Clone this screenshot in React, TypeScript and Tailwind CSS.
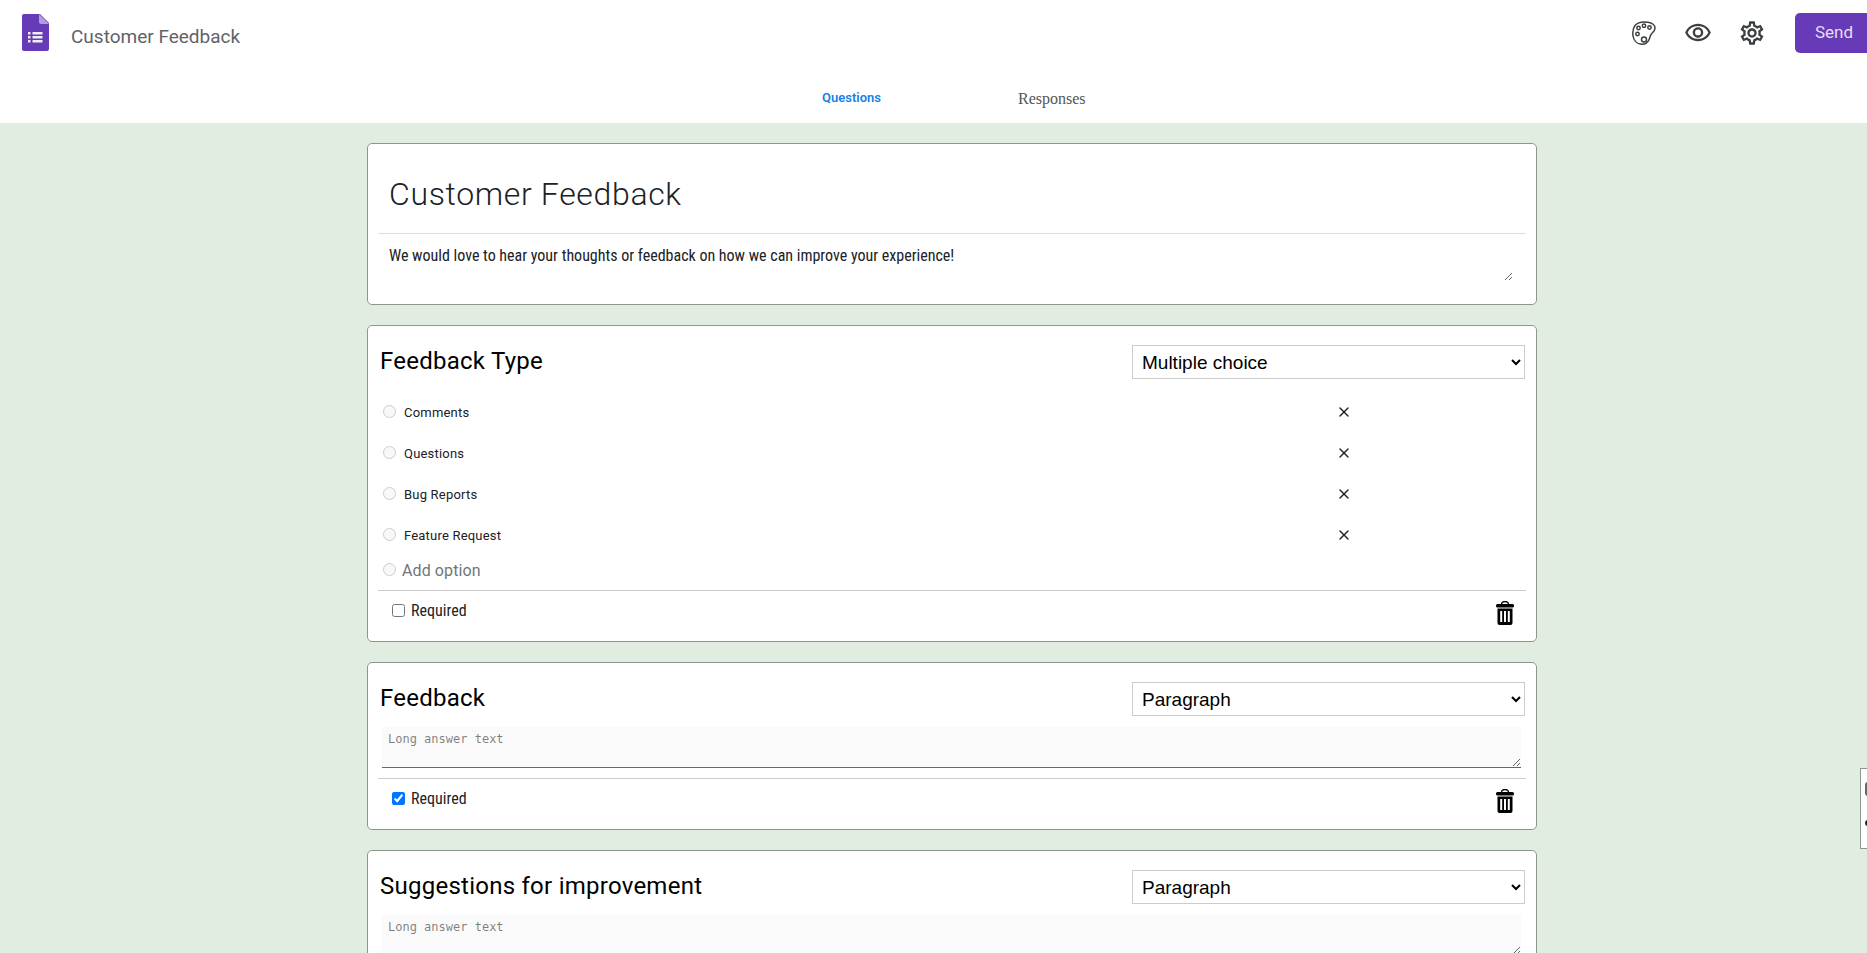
import React from 'react';
import { X } from 'lucide-react';
import { MdOutlineSettings, MdOutlineVisibility } from 'react-icons/md';

const sans = 'font-["Roboto",sans-serif]';

const FormsLogo = () => (
    <svg width="27" height="37" viewBox="0 0 27 37">
        <path d="M2 0h16l9 9v26a2 2 0 0 1-2 2H2a2 2 0 0 1-2-2V2a2 2 0 0 1 2-2z" fill="#673ab7" />
        <path d="M17 0l10 10H19a2 2 0 0 1-2-2z" fill="#b39ddb" />
        <g fill="#f1edf8">
            <rect x="6" y="18" width="2.5" height="2.5" />
            <rect x="6" y="22" width="2.5" height="2.5" />
            <rect x="6" y="26" width="2.5" height="2.5" />
            <rect x="10.5" y="18" width="10" height="2.5" />
            <rect x="10.5" y="22" width="10" height="2.5" />
            <rect x="10.5" y="26" width="10" height="2.5" />
        </g>
    </svg>
);

const PaletteIcon = () => (
    <svg width="24" height="24" viewBox="0 0 24 24" fill="none" stroke="#3c4043" strokeWidth="1.5">
        <path d="M3 4.5C5.5 1.5 11 .5 16 1.2c4 .6 7.2 3 7 6.3-.2 2.7-2.2 3.8-3.6 5.4-1.3 1.5-1.3 3.6-2.4 5.8-1.3 2.8-3.6 4.6-7 4.5C5 23 1.7 19.500 1 15 .5 11 1 7 3 4.500z" />
        <circle cx="6.500" cy="7" r="1.700" />
        <circle cx="12" cy="4.800" r="1.700" />
        <circle cx="17.500" cy="6.500" r="1.700" />
        <circle cx="5.500" cy="13" r="1.700" />
        <circle cx="12" cy="18.500" r="2.500" />
    </svg>
);

const TrashIcon = () => (
    <svg width="18" height="24" viewBox="0 0 18 24" className="shrink-0">
        <path d="M5.500 3.500C5.500 1.500 7 .5 9 .5s3.500 1 3.500 3" fill="none" stroke="#000" strokeWidth="1.400" />
        <rect x="0" y="3" width="18" height="3.500" rx="1.500" fill="#000" />
        <path d="M1.500 7.500h15V22a2 2 0 0 1-2 2h-11a2 2 0 0 1-2-2z" fill="#000" />
        <g fill="#fff">
            <rect x="4.200" y="10" width="2" height="11" />
            <rect x="8" y="10" width="2" height="11" />
            <rect x="11.800" y="10" width="2" height="11" />
        </g>
    </svg>
);

const Card = ({ children, className = '' }: { children: React.ReactNode; className?: string }) => (
    <div className={`bg-white border border-[#8f9591] rounded-[5px] ${className}`}>{children}</div>
);

const QuestionHead = ({ title, type }: { title: string; type: string }) => (
    <div className="flex items-center justify-between pl-3 pr-[11px] pt-[19px]">
        <h2 className={`${sans} -translate-y-[1px] text-[24px] leading-[33px] tracking-[0.25px] text-black`}>{title}</h2>
        <select
            defaultValue={type}
            className='w-[393px] h-[34px] pl-[5px] bg-white border border-[#ccc] text-[19px] text-black font-["Liberation_Sans",sans-serif]'
        >
            <option>Multiple choice</option>
            <option>Paragraph</option>
        </select>
    </div>
);

const Footer = ({ required }: { required?: boolean }) => (
    <div className="mx-[10px] border-t border-[#ccc] flex items-start justify-between pl-[14px] pr-[12px] pt-[10px] h-[50px]">
        <label className={`${sans} flex items-center gap-[6px] h-[20px] text-[16px] text-[#222] [font-stretch:75%]`}>
            <input type="checkbox" defaultChecked={required} className="m-0 w-[13px] h-[13px] -translate-y-[1px]" />
            Required
        </label>
        <TrashIcon />
    </div>
);

const OPTIONS = ['Comments', 'Questions', 'Bug Reports', 'Feature Request'];

export default function App() {
    return (
        <div className="relative h-screen overflow-hidden bg-[#e2ede1]">
            <header className="bg-white h-[123px]">
                <div className="flex items-start h-[70px]">
                    <div className="pl-[22px] pt-[14px]">
                        <FormsLogo />
                    </div>
                    <div className={`${sans} ml-[22px] mt-[24px] text-[19px] leading-[26px] text-[#5f6368]`}>Customer Feedback</div>
                    <div className="ml-auto flex items-center h-[66px] pr-[29px] text-[#3c4043]">
                        <PaletteIcon />
                        <MdOutlineVisibility size={28} className="ml-[28px]" />
                        <MdOutlineSettings size={28} className="ml-[26px]" />
                    </div>
                    <button className={`${sans} mt-[13px] w-[72px] h-[40px] pl-[20px] text-left text-[17px] text-[#e6def4] bg-[#673ab7] rounded-l-[5px]`}>
                        Send
                    </button>
                </div>
                <nav className="relative h-[53px]">
                    <span className={`${sans} absolute left-[822px] top-[19px] text-[13px] leading-[18px] font-semibold text-[#1a7fe8]`}>Questions</span>
                    <span className='absolute left-[1018px] top-[19px] text-[16px] leading-[20px] text-[#555] font-["Liberation_Serif",serif]'>Responses</span>
                </nav>
            </header>

            <main className="w-[1170px] ml-[367px] pt-[20px] flex flex-col gap-[20px]">
                <Card className="h-[162px] flex-none">
                    <div className={`${sans} mx-[10px] h-[90px] border-b border-[#ddd] pl-[11px] pt-[28px] text-[32px] leading-[44px] font-[350] tracking-[0.65px] text-[#202124]`}>
                        Customer Feedback
                    </div>
                    <textarea
                        defaultValue="We would love to hear your thoughts or feedback on how we can improve your experience!"
                        className={`${sans} block ml-[21px] mt-[11px] w-[1124px] h-[36px] outline-none text-[16px] leading-[22px] text-[#202124] [font-stretch:75%]`}
                    />
                </Card>

                <Card className="h-[317px] flex-none">
                    <QuestionHead title="Feedback Type" type="Multiple choice" />
                    <div className="mt-[13px]">
                        {OPTIONS.map((option) => (
                            <div key={option} className="flex items-center h-[41px] pl-[15px]">
                                <input type="radio" disabled className="m-0 w-[13px] h-[13px] -translate-y-[1px]" />
                                <span className={`${sans} ml-[8px] w-[932px] text-[13px] tracking-[0.2px] text-[#202124]`}>{option}</span>
                                <X size={16} strokeWidth={2} className="text-[#202124] -translate-y-[1px]" />
                            </div>
                        ))}
                    </div>
                    <div className="flex items-center h-[30px] pl-[15px]">
                        <input type="radio" disabled className="m-0 w-[13px] h-[13px] -translate-y-[2px]" />
                        <span className={`${sans} ml-[6px] text-[16px] tracking-[0.1px] text-[#70757a]`}>Add option</span>
                    </div>
                    <div className="mt-[4px]">
                        <Footer />
                    </div>
                </Card>

                <Card className="h-[168px] flex-none">
                    <QuestionHead title="Feedback" type="Paragraph" />
                    <textarea
                        placeholder="Long answer text"
                        className='block ml-[14px] mt-[11px] w-[1139px] h-[41px] pl-[6px] pr-[5px] pt-[3px] bg-[#fafafa] border-b border-[#666] outline-none text-[12px] font-["DejaVu_Sans_Mono",monospace]'
                    />
                    <div className="mt-[10px]">
                        <Footer required />
                    </div>
                </Card>

                <Card className="h-[168px] flex-none">
                    <QuestionHead title="Suggestions for improvement" type="Paragraph" />
                    <textarea
                        placeholder="Long answer text"
                        className='block ml-[14px] mt-[11px] w-[1139px] h-[41px] pl-[6px] pr-[5px] pt-[3px] bg-[#fafafa] border-b border-[#666] outline-none text-[12px] font-["DejaVu_Sans_Mono",monospace]'
                    />
                </Card>
            </main>

            <div className="absolute right-0 top-[768px] w-[7px] h-[81px] bg-white border-y border-l border-[#8f9591] overflow-hidden">
                <div className="mt-[13px] ml-[4px] w-[3px] h-[14px] rounded-l-full bg-[#666]" />
                <div className="mt-[24px] ml-[4px] w-[3px] h-[6px] rounded-l-full bg-[#222]" />
            </div>
        </div>
    );
}
